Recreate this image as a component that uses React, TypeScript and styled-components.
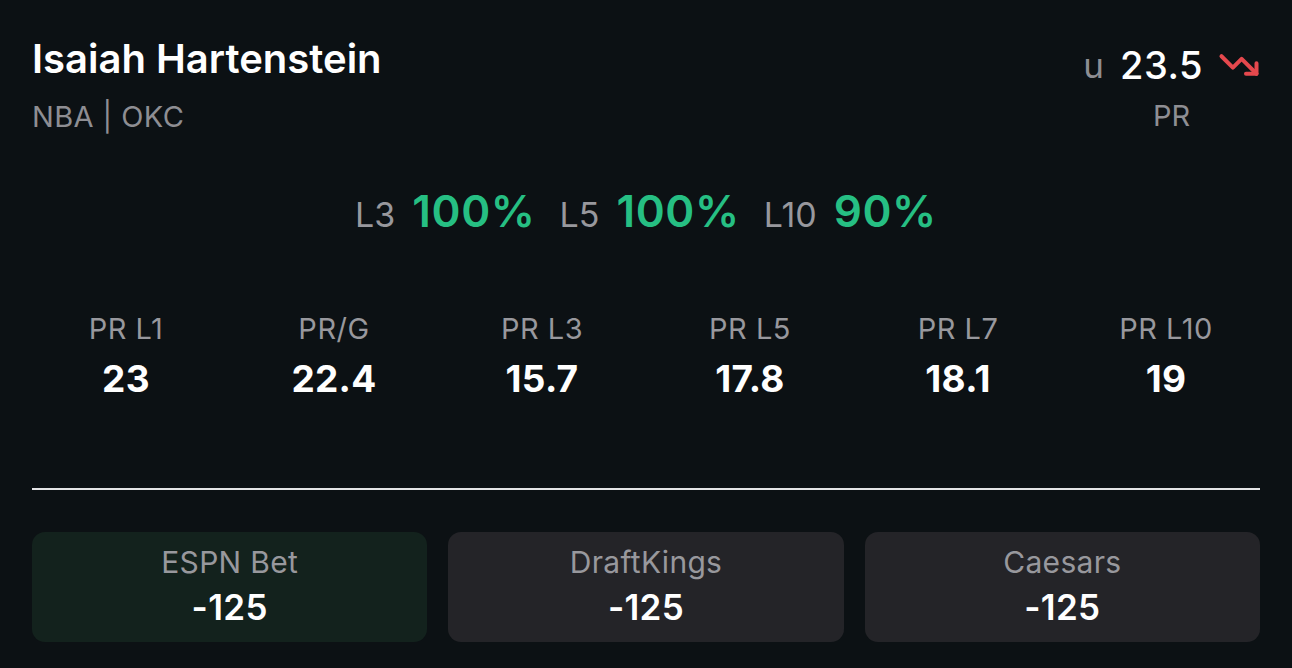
import React from 'react';
import styled, { createGlobalStyle } from 'styled-components';
import { TrendingDown } from 'lucide-react';

const GlobalStyle = createGlobalStyle`
  html, body {
    margin: 0;
    padding: 0;
    background-color: #0c1114;
  }

  body {
    font-family: Inter, "Noto Sans", "Liberation Sans", sans-serif;
    color: #ffffff;
  }
`;

const Card = styled.main`
  box-sizing: border-box;
  width: 1292px;
  height: 668px;
  padding: 35px 32px 0;
  background-color: #0c1114;
  overflow: hidden;
`;

const Header = styled.header`
  display: flex;
  justify-content: space-between;
  align-items: flex-start;
`;

const Name = styled.h1`
  margin: 0;
  font-size: 40px;
  line-height: 47px;
  font-weight: 600;
  letter-spacing: 0;
`;

const Meta = styled.div`
  margin-top: 18px;
  color: #8e8e93;
  font-size: 29px;
  line-height: 34px;
  letter-spacing: 0.4px;
`;

const LineBox = styled.div`
  display: flex;
  flex-direction: column;
  align-items: center;
  margin-top: 8px;
`;

const LineRow = styled.div`
  display: flex;
  align-items: center;
  font-size: 38px;
  line-height: 44px;

  svg {
    margin-left: 15px;
  }
`;

const Side = styled.span`
  margin-right: 16px;
  color: #8e8e93;
  font-size: 35px;
`;

const Line = styled.span`
  font-weight: 500;
  letter-spacing: 0.5px;
`;

const Market = styled.div`
  margin-top: 12px;
  color: #8e8e93;
  font-size: 29px;
  line-height: 34px;
`;

const HitRates = styled.section`
  display: flex;
  justify-content: center;
  align-items: baseline;
  gap: 24px;
  margin-top: 52px;
`;

const Hit = styled.div`
  display: flex;
  align-items: baseline;
  gap: 17px;
`;

const HitLabel = styled.span`
  color: #98989d;
  font-size: 34px;
  line-height: 50px;
`;

const HitValue = styled.span<{ $good: boolean }>`
  color: ${(p) => (p.$good ? '#26bf83' : '#e5484d')};
  font-size: 44px;
  line-height: 50px;
  font-weight: 600;
  letter-spacing: 0.6px;
`;

const Stats = styled.section`
  display: grid;
  grid-template-columns: repeat(6, 208px);
  justify-content: center;
  margin: 72px -32px 0;
`;

const Stat = styled.div`
  display: flex;
  flex-direction: column;
  align-items: center;
  gap: 11px;
`;

const StatLabel = styled.span`
  color: #98989d;
  font-size: 29px;
  line-height: 34px;
  letter-spacing: 0.5px;
`;

const StatValue = styled.span`
  font-size: 37px;
  line-height: 44px;
  font-weight: 700;
  letter-spacing: 0.3px;
`;

const Divider = styled.hr`
  margin: 87px 0 0;
  border: none;
  height: 2px;
  background-color: #e4e4e6;
`;

const Books = styled.section`
  display: grid;
  grid-template-columns: repeat(3, 1fr);
  gap: 21px;
  margin-top: 42px;
`;

const Book = styled.div<{ $best: boolean }>`
  display: flex;
  flex-direction: column;
  align-items: center;
  justify-content: center;
  gap: 8px;
  height: 110px;
  padding-bottom: 3px;
  box-sizing: border-box;
  border-radius: 13px;
  background-color: ${(p) => (p.$best ? '#13221d' : '#242428')};
`;

const BookName = styled.span`
  color: #98989d;
  font-size: 30px;
  line-height: 34px;
  letter-spacing: 0.3px;
`;

const BookOdds = styled.span`
  font-size: 35px;
  line-height: 40px;
  font-weight: 600;
  letter-spacing: 0.3px;
`;

const hitRates = [
  { label: 'L3', value: '100%' },
  { label: 'L5', value: '100%' },
  { label: 'L10', value: '90%' },
];

const stats = [
  { label: 'PR L1', value: '23' },
  { label: 'PR/G', value: '22.4' },
  { label: 'PR L3', value: '15.7' },
  { label: 'PR L5', value: '17.8' },
  { label: 'PR L7', value: '18.1' },
  { label: 'PR L10', value: '19' },
];

const books = [
  { name: 'ESPN Bet', odds: '-125', best: true },
  { name: 'DraftKings', odds: '-125', best: false },
  { name: 'Caesars', odds: '-125', best: false },
];

export default function App() {
  return (
    <>
      <GlobalStyle />
      <Card>
        <Header>
          <div>
            <Name>Isaiah Hartenstein</Name>
            <Meta>NBA | OKC</Meta>
          </div>
          <LineBox>
            <LineRow>
              <Side>u</Side>
              <Line>23.5</Line>
              <TrendingDown size={42} color="#e5484d" strokeWidth={2.3} />
            </LineRow>
            <Market>PR</Market>
          </LineBox>
        </Header>

        <HitRates>
          {hitRates.map((h) => (
            <Hit key={h.label}>
              <HitLabel>{h.label}</HitLabel>
              <HitValue $good>{h.value}</HitValue>
            </Hit>
          ))}
        </HitRates>

        <Stats>
          {stats.map((s) => (
            <Stat key={s.label}>
              <StatLabel>{s.label}</StatLabel>
              <StatValue>{s.value}</StatValue>
            </Stat>
          ))}
        </Stats>

        <Divider />

        <Books>
          {books.map((b) => (
            <Book key={b.name} $best={b.best}>
              <BookName>{b.name}</BookName>
              <BookOdds>{b.odds}</BookOdds>
            </Book>
          ))}
        </Books>
      </Card>
    </>
  );
}
